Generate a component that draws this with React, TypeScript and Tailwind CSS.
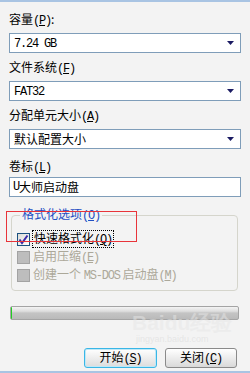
import React from 'react';

// Latin runs in the old bitmap font are half-width; mono + tight tracking gets close
function Lat({ children }: { children: React.ReactNode }) {
  return <span className="font-['Liberation_Mono',monospace] tracking-[-1.2px]">{children}</span>;
}

function Key({ k }: { k: string }) {
  return (
    <Lat>
      (<u className="underline-offset-1">{k}</u>)
    </Lat>
  );
}

function Combo({ children }: { children: React.ReactNode }) {
  return (
    <div className="flex h-[20px] items-center border border-[#7f9db9] bg-white pl-[4px] pr-[5px]">
      <div className="flex-1 leading-[14px] text-black">{children}</div>
      <svg width="8" height="5" viewBox="0 0 8 5">
        <path d="M0 0h7L3.5 4z" fill="#1b1b63" />
      </svg>
    </div>
  );
}

function CheckBox({ checked, disabled }: { checked?: boolean; disabled?: boolean }) {
  if (disabled) {
    return <div className="h-[13px] w-[13px] shrink-0 border border-[#a3a3a3] bg-[#bdbdbd]" />;
  }
  return (
    <div className="flex h-[13px] w-[13px] shrink-0 items-center justify-center border border-[#1c5180] bg-[linear-gradient(135deg,#dcdcd6,#ffffff)]">
      {checked && (
        <svg width="11" height="11" viewBox="0 0 11 11">
          <path d="M1.5 5.5l2.5 3.5L9.5 1.5" fill="none" stroke="#3c2aa8" strokeWidth="2" />
        </svg>
      )}
    </div>
  );
}

function Button({ children, focused }: { children: React.ReactNode; focused?: boolean }) {
  return (
    <button
      className={
        focused
          ? 'flex h-[20px] w-[73px] items-center justify-center rounded-[3px] border border-[#39b6e6] bg-[linear-gradient(#ffffff,#dcdcdc)] text-black shadow-[inset_0_0_0_1px_#bfe8f7]'
          : 'flex h-[20px] w-[72px] items-center justify-center rounded-[3px] border border-[#8a8a8a] bg-[linear-gradient(#ffffff,#d9d9d9)] text-black'
      }
    >
      <span className="leading-[14px]">{children}</span>
    </button>
  );
}

export default function App() {
  return (
    <div className="relative flex h-[373px] w-[250px] flex-col overflow-hidden border-y-2 border-[#a9c4e3] bg-[#f3f3f3] px-[9px] font-['Noto_Sans_CJK_SC',sans-serif] text-[12px] text-black">
      <div className="mt-[10px] leading-[14px]">
        容量<Key k="P" />:
      </div>
      <div className="mt-[5px]">
        <Combo>
          <Lat>7.24 GB</Lat>
        </Combo>
      </div>

      <div className="mt-[7px] leading-[14px]">
        文件系统<Key k="F" />
      </div>
      <div className="mt-[5px]">
        <Combo>
          <Lat>FAT32</Lat>
        </Combo>
      </div>

      <div className="mt-[7px] leading-[14px]">
        分配单元大小<Key k="A" />
      </div>
      <div className="mt-[5px]">
        <Combo>默认配置大小</Combo>
      </div>

      <div className="mt-[10px] leading-[14px]">
        卷标<Key k="L" />
      </div>
      <div className="mt-[2px] flex h-[20px] items-center border border-[#7f9db9] bg-white pl-[3px] leading-[14px]">
        <Lat>U</Lat>大师启动盘
      </div>

      <fieldset className="mt-[10px] ml-[2px] mr-[3px] rounded-[4px] border border-[#d5d5cc] pb-[6px] pl-[5px]">
        <legend className="ml-[3px] px-[2px] leading-[14px] text-[#1f4fc4]">
          格式化选项<Key k="O" />
        </legend>
        <div className="mt-[7px] flex h-[18px] items-center">
          <CheckBox checked />
          <div className="ml-[2px] border border-dotted border-black px-[1px] leading-[14px]">
            快速格式化<Key k="Q" />
          </div>
        </div>
        <div className="flex h-[18px] items-center text-[#aca899]">
          <CheckBox disabled />
          <div className="ml-[3px] leading-[14px]">
            启用压缩<Key k="E" />
          </div>
        </div>
        <div className="flex h-[18px] items-center text-[#aca899]">
          <CheckBox disabled />
          <div className="ml-[3px] leading-[14px]">
            创建一个 <Lat>MS-DOS</Lat> 启动盘<Key k="M" />
          </div>
        </div>
      </fieldset>

      <div className="mt-[15px] ml-[1px] flex h-[14px] w-[229px] overflow-hidden rounded-[2px] border border-[#a4a4a4] bg-[linear-gradient(#f4f4f4_0%,#dedede_35%,#c4c4c4_50%,#bababa_100%)]">
        <div className="w-[1px] bg-[#22d022]" />
      </div>

      <div className="mt-[28px] mr-[4px] flex justify-end gap-[8px]">
        <Button focused>
          开始<Key k="S" />
        </Button>
        <Button>
          关闭<Key k="C" />
        </Button>
      </div>

      {/* red annotation box */}
      <div className="pointer-events-none absolute left-[6px] top-[209px] h-[31px] w-[131px] border border-[#e8343a]" />

      {/* watermark */}
      <div className="pointer-events-none absolute left-[132px] top-[310px] flex flex-col items-start">
        <span className="font-['Liberation_Sans',sans-serif] text-[21px] font-bold leading-[22px] text-[#e6e6e6]/50">
          Baidu经验
        </span>
        <span className="ml-[4px] font-['Liberation_Sans',sans-serif] text-[9px] leading-[10px] text-[#dcdcdc]/60">
          jingyan.baidu.com
        </span>
      </div>
    </div>
  );
}
